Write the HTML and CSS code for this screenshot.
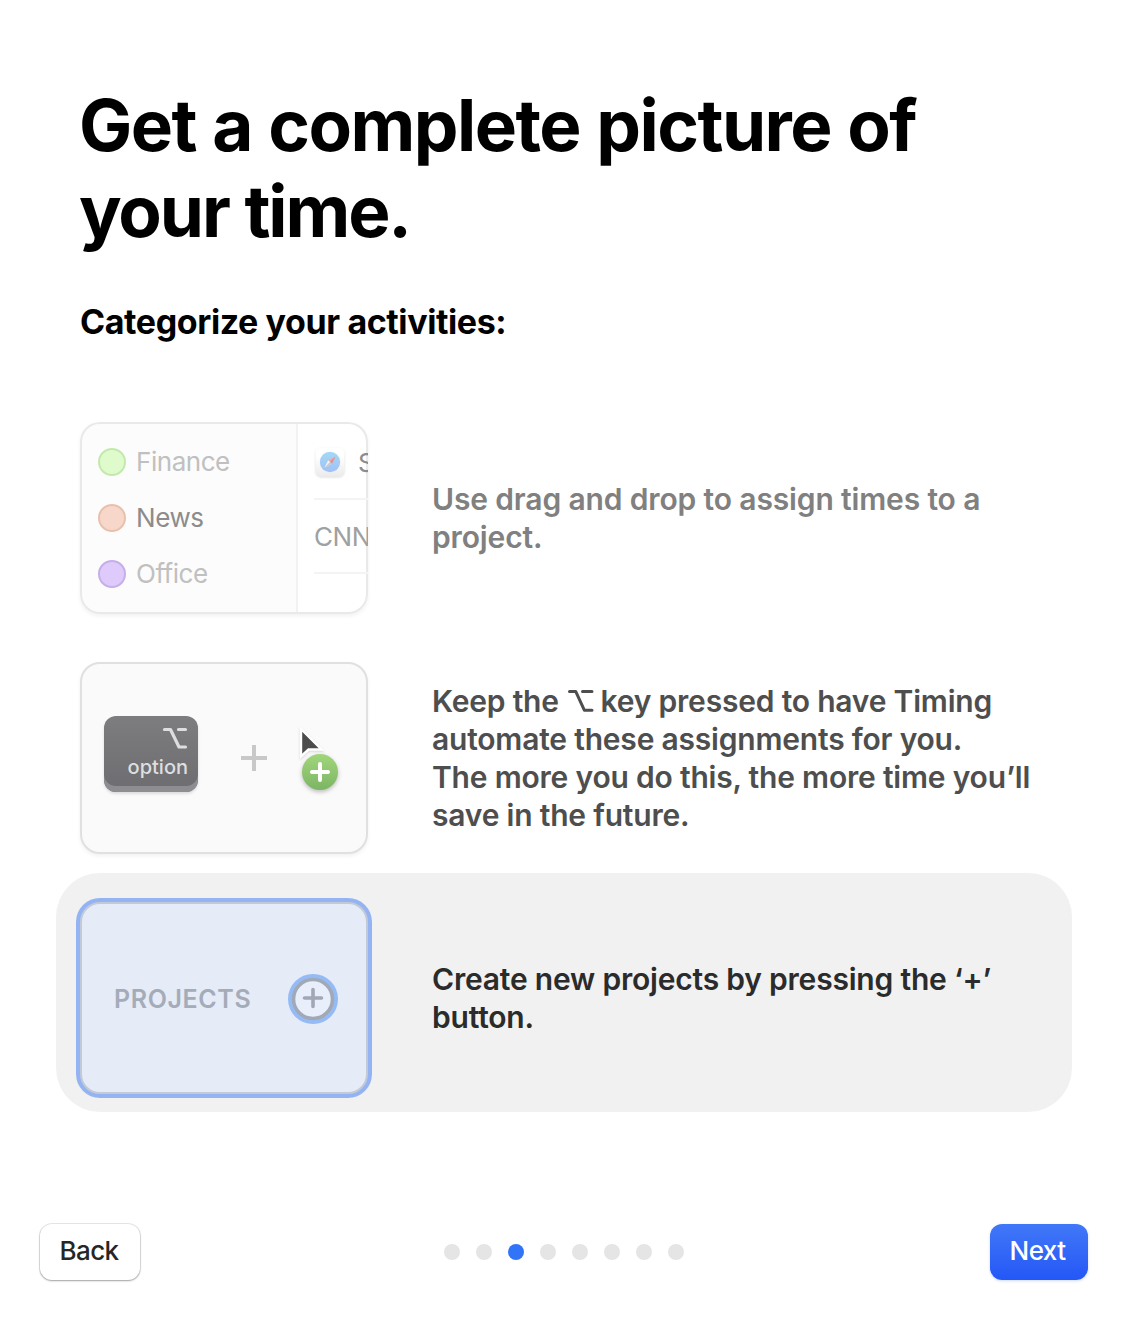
FILE: index.html
```html
<!DOCTYPE html>
<html lang="en">
<head>
<meta charset="utf-8">
<title>Timing – Welcome</title>
<link rel="stylesheet" href="styles.css">
</head>
<body>
<main class="page">
  <header class="intro">
    <h1 class="title">Get a complete picture of<br><span class="title-end">your time.</span></h1>
    <h2 class="subtitle">Categorize your activities:</h2>
  </header>

  <section class="steps">
    <div class="step step-faded">
      <div class="card card-drag">
        <ul class="projects">
          <li class="project"><i class="swatch swatch-green"></i><span>Finance</span></li>
          <li class="project project-target"><i class="swatch swatch-orange"></i><span>News</span></li>
          <li class="project"><i class="swatch swatch-purple"></i><span>Office</span></li>
        </ul>
        <div class="activities">
          <div class="activity activity-app">
            <svg class="safari" width="34" height="34" viewBox="0 0 34 34">
              <defs>
                <linearGradient id="tile" x1="0" y1="0" x2="0" y2="1"><stop offset="0.3" stop-color="#fff"/><stop offset="1" stop-color="#ebebeb"/></linearGradient>
                <linearGradient id="dial" x1="0" y1="0" x2="0" y2="1"><stop offset="0" stop-color="#a3d9f5"/><stop offset="1" stop-color="#a1c0f5"/></linearGradient>
              </defs>
              <rect class="tile" x="2.5" y="2.5" width="29" height="29" rx="6" fill="url(#tile)"/>
              <circle cx="17" cy="17" r="10.2" fill="url(#dial)"/>
              <path d="M22.5 11.5 15.2 15.2 18.8 18.8z" fill="#f5a6a3"/>
              <path d="M11.5 22.5 15.2 15.2 18.8 18.8z" fill="#f4f4f4"/>
              <path d="M22.5 11.5 17 17 18.8 18.8z" fill="#d99090"/>
              <path d="M11.5 22.5 17 17 18.8 18.8z" fill="#c3c9d2"/>
            </svg>
            <span>S</span>
          </div>
          <div class="activity"><span>CNN</span></div>
        </div>
      </div>
      <p class="caption caption-light">Use drag and drop to assign times to a<br>project.</p>
    </div>

    <div class="step">
      <div class="card card-option">
        <div class="key">
          <svg width="26" height="24" viewBox="0 0 26 24"><path d="M2.5 3.5H8.5L17 21H23.5M16.5 3.5H23.5" fill="none" stroke="#dededf" stroke-width="3.2" stroke-linecap="round" stroke-linejoin="round"/></svg>
          <span>option</span>
        </div>
        <svg class="plus" width="26" height="26" viewBox="0 0 26 26"><path d="M13 0V26M0 13H26" stroke="#c8c8c9" stroke-width="4"/></svg>
        <svg class="drop" width="50" height="72" viewBox="0 0 50 72">
          <defs><linearGradient id="badge" x1="0" y1="0" x2="0" y2="1"><stop offset="0" stop-color="#a1d67b"/><stop offset="1" stop-color="#7cb564"/></linearGradient></defs>
          <path class="pointer" d="M6 5V32.5L13.5 25.5H26.5z" fill="#4c4c4c" stroke="#fff" stroke-width="2.4"/>
          <circle class="badge" cx="25" cy="48" r="18" fill="url(#badge)"/>
          <path d="M25 40V56M17 48H33" stroke="#fff" stroke-width="4" stroke-linecap="round"/>
        </svg>
      </div>
      <p class="caption caption-medium">Keep the <svg class="option-glyph" width="26" height="22" viewBox="0 0 26 22"><path d="M1.5 1.6H7.8L16.3 20.2H24M14.5 1.6H24" fill="none" stroke="currentColor" stroke-width="3" stroke-linecap="round" stroke-linejoin="round"/></svg> key pressed to have Timing<br>automate these assignments for you.<br>The more you do this, the more time you’ll<br>save in the future.</p>
    </div>

    <div class="step step-active">
      <div class="card card-create">
        <span class="create-label">PROJECTS</span>
        <svg class="create-button" width="50" height="50" viewBox="0 0 50 50">
          <circle cx="25" cy="25" r="22.5" fill="none" stroke="#94bbf5" stroke-width="5"/>
          <circle cx="25" cy="25" r="19.5" fill="#e9effa" stroke="#a1a9b7" stroke-width="3.6"/>
          <path d="M25 15.5V32.5M16.5 24H33.5" stroke="#a1a7b4" stroke-width="3.6" stroke-linecap="round"/>
        </svg>
      </div>
      <p class="caption">Create new projects by pressing the ‘+’<br>button.</p>
    </div>
  </section>

  <footer class="footer">
    <button class="button button-back" type="button">Back</button>
    <div class="dots">
      <i class="dot"></i><i class="dot"></i><i class="dot dot-current"></i><i class="dot"></i><i class="dot"></i><i class="dot"></i><i class="dot"></i><i class="dot"></i>
    </div>
    <button class="button button-next" type="button">Next</button>
  </footer>
</main>
</body>
</html>
```
FILE: styles.css
```css
* { box-sizing: border-box; }

body {
  margin: 0;
  background: #fff;
  font-family: Inter, "Liberation Sans", sans-serif;
  color: #000;
}

.page {
  display: flex;
  flex-direction: column;
  width: 1128px;
  height: 1320px;
}

.intro {
  height: 393px;
  padding: 82px 80px 0;
}

.title {
  margin: 0 0 0 -1px;
  font-size: 71px;
  font-weight: 730;
  line-height: 86px;
  letter-spacing: -1.53px;
  word-spacing: 1px;
  white-space: nowrap;
}

.title-end { letter-spacing: -2.1px; }

.subtitle {
  margin: 46px 0 0;
  font-size: 34px;
  font-weight: 700;
  line-height: 44px;
  letter-spacing: -0.4px;
}

.steps { padding: 0 56px; }

.step {
  display: flex;
  align-items: center;
  gap: 64px;
  height: 240px;
  padding: 29px 24px 19px;
  border-radius: 44px;
}

.step-active {
  height: 239px;
  padding-bottom: 18px;
  background: #f1f1f1;
}

.card {
  display: flex;
  flex: none;
  width: 288px;
  height: 192px;
  border: 2px solid #e0e0e0;
  border-radius: 20px;
  background: #fafafb;
  box-shadow: 0 2px 4px rgba(0, 0, 0, 0.06);
}

.caption {
  margin: 0;
  color: #2b2b2b;
  font-size: 30px;
  font-weight: 600;
  line-height: 38px;
  letter-spacing: -0.2px;
  white-space: nowrap;
}

.caption-light {
  color: #808080;
  letter-spacing: -0.14px;
}

.caption-medium { color: #4e4e4e; }

.option-glyph { margin: 0 -1px 0 2px; }

/* Drag and drop card */
.card-drag {
  overflow: hidden;
  border: 0;
  background: linear-gradient(90deg, #fcfcfc 216px, #f2f2f2 216px 218px, #fff 218px);
  box-shadow: inset 0 0 0 2px #e9e9e9, 0 2px 4px rgba(0, 0, 0, 0.06);
  font-size: 26px;
  letter-spacing: -0.45px;
}

.projects {
  width: 218px;
  margin: 0;
  padding: 12px 18px;
  list-style: none;
  color: #c0c0c0;
}

.project {
  display: flex;
  align-items: center;
  gap: 10px;
  height: 56px;
}

.project-target { color: #8c8c8c; }
.project span { margin-top: -1px; }

.swatch {
  width: 28px;
  height: 28px;
  border: 2px solid;
  border-radius: 50%;
}

.swatch-green { background: #dffacb; border-color: #c3e9ad; }
.swatch-orange { background: #f7d7c9; border-color: #e9c0ae; }
.swatch-purple { background: #dfcbfb; border-color: #c5aee9; }

.activities {
  flex: 1;
  min-width: 0;
  padding: 4px 0 0 16px;
  color: #a0a0a0;
}

.activity {
  display: flex;
  align-items: center;
  height: 74px;
  border-bottom: 2px solid #f4f4f4;
}

.activity-app {
  gap: 11px;
  color: #8c8c8c;
}

.safari {
  flex: none;
  margin-left: -1px;
}

.tile { filter: drop-shadow(0 1px 1px rgba(0, 0, 0, 0.12)); }

/* Option key card */
.card-option {
  align-items: center;
  padding-left: 22px;
}

.key {
  display: flex;
  flex-direction: column;
  align-items: flex-end;
  width: 94px;
  height: 76px;
  margin-top: -8px;
  padding: 10px 10px 0 0;
  border-radius: 12px;
  background: linear-gradient(#7d7d7f, #6d6d71);
  box-shadow: inset 0 -6px 0 #8d8d92, 0 2px 3px rgba(0, 0, 0, 0.12);
  color: #dededf;
  font-size: 20px;
  font-weight: 500;
  line-height: 34px;
}

.plus { margin-left: 43px; }
.drop { margin: 4px 0 0 28px; }
.pointer { filter: drop-shadow(0 1px 1px rgba(0, 0, 0, 0.15)); }
.badge { filter: drop-shadow(0 2px 2px rgba(0, 0, 0, 0.25)); }

/* New project card */
.card-create {
  align-items: center;
  justify-content: space-between;
  padding: 2px 28px 0 32px;
  border-color: #c3cad7;
  background: #e5ebf7;
  box-shadow: 0 0 0 4px #94b3f3;
}

.create-label {
  color: #a5acb9;
  font-size: 25px;
  font-weight: 600;
  letter-spacing: 0.6px;
}

/* Navigation */
.footer {
  display: flex;
  align-items: center;
  justify-content: space-between;
  height: 56px;
  margin: 112px 40px 0;
}

.button {
  height: 56px;
  padding: 0 0 2px;
  border: 0;
  border-radius: 12px;
  font: 500 26px/54px Inter, "Liberation Sans", sans-serif;
  letter-spacing: -0.6px;
}

.button-back {
  width: 100px;
  padding-right: 2px;
  background: #fff;
  color: #262626;
  box-shadow: 0 0 0 1px rgba(0, 0, 0, 0.09), 0 1px 2px rgba(0, 0, 0, 0.3);
}

.button-next {
  width: 98px;
  padding-right: 3px;
  background: linear-gradient(#4178f8, #2457f6);
  color: #fff;
  box-shadow: 0 1px 3px rgba(36, 87, 246, 0.22);
}

.dots {
  display: flex;
  gap: 16px;
  margin-right: 2px;
}

.dot {
  width: 16px;
  height: 16px;
  border-radius: 50%;
  background: #e5e5e5;
}

.dot-current { background: #3174f8; }
```
